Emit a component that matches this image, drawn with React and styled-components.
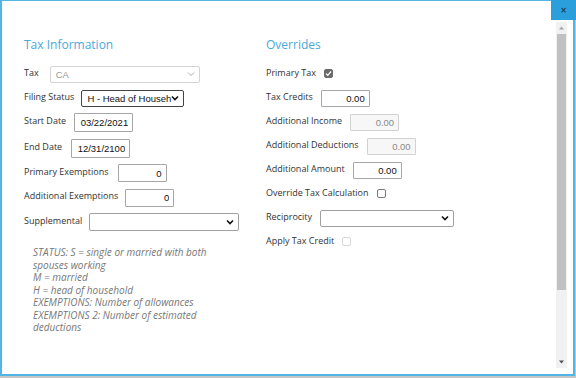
import React from 'react';
import styled, { createGlobalStyle } from 'styled-components';

const Global = createGlobalStyle`
  html, body {
    margin: 0;
    padding: 0;
    background: #c6c6c6;
    width: 576px;
    height: 378px;
    overflow: hidden;
  }
  * { box-sizing: border-box; }
`;

const Dialog = styled.div`
  position: relative;
  width: 575px;
  height: 376px;
  background: #fff;
  border: 2px solid #52b5e6;
  border-top-width: 1px;
  display: flex;
  font-family: "Open Sans", "Noto Sans", sans-serif;
`;

const Close = styled.div`
  position: absolute;
  top: -1px;
  right: -3px;
  width: 25px;
  height: 20px;
  background: #2a9fdc;
  color: #1d3d55;
  font-family: "DejaVu Sans", sans-serif;
  font-size: 8px;
  font-weight: bold;
  display: flex;
  align-items: center;
  justify-content: center;
`;

const Content = styled.div`
  flex: 1;
  display: grid;
  grid-template-columns: 242px 242px;
  align-content: start;
  padding: 36px 0 0 22px;
`;

const Column = styled.div`
  display: flex;
  flex-direction: column;
`;

const Heading = styled.h2`
  margin: 0 0 9px;
  font-size: 12px;
  line-height: 16px;
  font-weight: 400;
  color: #49a9dd;
`;

const Row = styled.div`
  display: flex;
  align-items: center;
  height: ${p => p.h || 24}px;
`;

const Label = styled.span`
  font-size: 9px;
  line-height: 12px;
  color: #333;
  margin-right: ${p => p.gap || 8}px;
  margin-top: -3px;
  white-space: nowrap;
`;

const Field = styled.input`
  width: ${p => p.w}px;
  height: ${p => p.ht || 17}px;
  padding: 0 4px;
  border: 1px solid ${p => (p.disabled ? '#d2d2d2' : '#a6a6a6')};
  border-radius: 1px;
  background: ${p => (p.disabled ? '#f7f7f7' : '#fff')};
  color: ${p => (p.disabled ? '#8a8a8a' : '#111')};
  font-family: "Liberation Sans", Arial, sans-serif;
  font-size: 9.5px;
  text-align: right;
  outline: none;
`;

const SelectBox = styled.div`
  width: ${p => p.w}px;
  height: ${p => p.ht || 17}px;
  display: flex;
  align-items: center;
  justify-content: space-between;
  padding: 0 4px 0 ${p => p.pl || 5}px;
  border: 1px solid ${p => (p.dim ? '#d4d4d4' : p.dark ? '#444' : '#a0a0a0')};
  border-radius: 2px;
  background: #fff;
  color: ${p => (p.dim ? '#999' : '#111')};
  font-family: "Liberation Sans", Arial, sans-serif;
  font-size: 9.5px;
  overflow: hidden;
  white-space: nowrap;
`;

const SelectText = styled.span`
  overflow: hidden;
  flex: 1;
`;

const Box = styled.span`
  width: 9px;
  height: 9px;
  border-radius: 2px;
  margin-top: -2px;
  display: flex;
  align-items: center;
  justify-content: center;
  background: ${p => (p.checked ? '#6b6b6b' : '#fff')};
  border: 1px solid ${p => (p.checked ? '#6b6b6b' : p.disabled ? '#d8d8d8' : '#7a7a7a')};
`;

const Note = styled.div`
  margin: 12px 0 0 9px;
  width: 205px;
  font-size: 10px;
  line-height: 12.5px;
  font-style: italic;
  color: #777;
`;

const ScrollTrack = styled.div`
  width: 11px;
  margin: 21px 6px 6px 0;
  background: #f1f1f1;
  display: flex;
  flex-direction: column;
  align-items: center;
`;

const Arrow = styled.div`
  height: 12px;
  display: flex;
  align-items: center;
  justify-content: center;
`;

const Thumb = styled.div`
  width: 9px;
  height: 256px;
  background: #c1c1c1;
`;

const Spacer = styled.div`
  flex: 1;
`;

function Chevron({ color = '#111', weight = 1.6 }) {
  return (
    <svg width="8" height="6" viewBox="0 0 8 6">
      <path d="M1 1.5 L4 4.5 L7 1.5" fill="none" stroke={color} strokeWidth={weight} />
    </svg>
  );
}

function Check({ checked, disabled }) {
  return (
    <Box checked={checked} disabled={disabled}>
      {checked && (
        <svg width="7" height="7" viewBox="0 0 7 7">
          <path d="M1 3.6 L2.8 5.3 L6 1.5" fill="none" stroke="#fff" strokeWidth="1.3" />
        </svg>
      )}
    </Box>
  );
}

function Tri({ up }) {
  return (
    <svg width="5" height="4" viewBox="0 0 5 4">
      <path d={up ? 'M0 3.5 L2.5 0.5 L5 3.5 Z' : 'M0 0.5 L2.5 3.5 L5 0.5 Z'} fill={up ? '#a3a3a3' : '#505050'} />
    </svg>
  );
}

export default function App() {
  return (
    <>
      <Global />
      <Dialog>
        <Content>
          <Column>
            <Heading>Tax Information</Heading>
            <Row>
              <Label gap={11}>Tax</Label>
              <SelectBox w={150} dim>
                <SelectText>CA</SelectText>
                <Chevron color="#aaa" weight={1} />
              </SelectBox>
            </Row>
            <Row>
              <Label gap={7}>Filing Status</Label>
              <SelectBox w={103} dark>
                <SelectText>H - Head of Household</SelectText>
                <Chevron />
              </SelectBox>
            </Row>
            <Row h={25}>
              <Label>Start Date</Label>
              <Field w={59} ht={19} readOnly value="03/22/2021" />
            </Row>
            <Row h={26}>
              <Label gap={9}>End Date</Label>
              <Field w={59} ht={19} readOnly value="12/31/2100" />
            </Row>
            <Row>
              <Label gap={9}>Primary Exemptions</Label>
              <Field w={49} ht={18} readOnly value="0" />
            </Row>
            <Row h={25}>
              <Label gap={7}>Additional Exemptions</Label>
              <Field w={49} ht={18} readOnly value="0" />
            </Row>
            <Row>
              <Label gap={7}>Supplemental</Label>
              <SelectBox w={150} ht={18}>
                <SelectText />
                <Chevron />
              </SelectBox>
            </Row>
            <Note>
              STATUS: S = single or married with both spouses working<br />
              M = married<br />
              H = head of household<br />
              EXEMPTIONS: Number of allowances<br />
              EXEMPTIONS 2: Number of estimated deductions
            </Note>
          </Column>
          <Column>
            <Heading>Overrides</Heading>
            <Row>
              <Label>Primary Tax</Label>
              <Check checked />
            </Row>
            <Row>
              <Label>Tax Credits</Label>
              <Field w={49} readOnly value="0.00" />
            </Row>
            <Row>
              <Label>Additional Income</Label>
              <Field w={49} disabled value="0.00" />
            </Row>
            <Row>
              <Label>Additional Deductions</Label>
              <Field w={49} disabled value="0.00" />
            </Row>
            <Row>
              <Label>Additional Amount</Label>
              <Field w={49} readOnly value="0.00" />
            </Row>
            <Row>
              <Label>Override Tax Calculation</Label>
              <Check />
            </Row>
            <Row>
              <Label>Reciprocity</Label>
              <SelectBox w={134}>
                <SelectText />
                <Chevron />
              </SelectBox>
            </Row>
            <Row>
              <Label>Apply Tax Credit</Label>
              <Check disabled />
            </Row>
          </Column>
        </Content>
        <ScrollTrack>
          <Arrow><Tri up /></Arrow>
          <Thumb />
          <Spacer />
          <Arrow><Tri /></Arrow>
        </ScrollTrack>
        <Close>×</Close>
      </Dialog>
    </>
  );
}
